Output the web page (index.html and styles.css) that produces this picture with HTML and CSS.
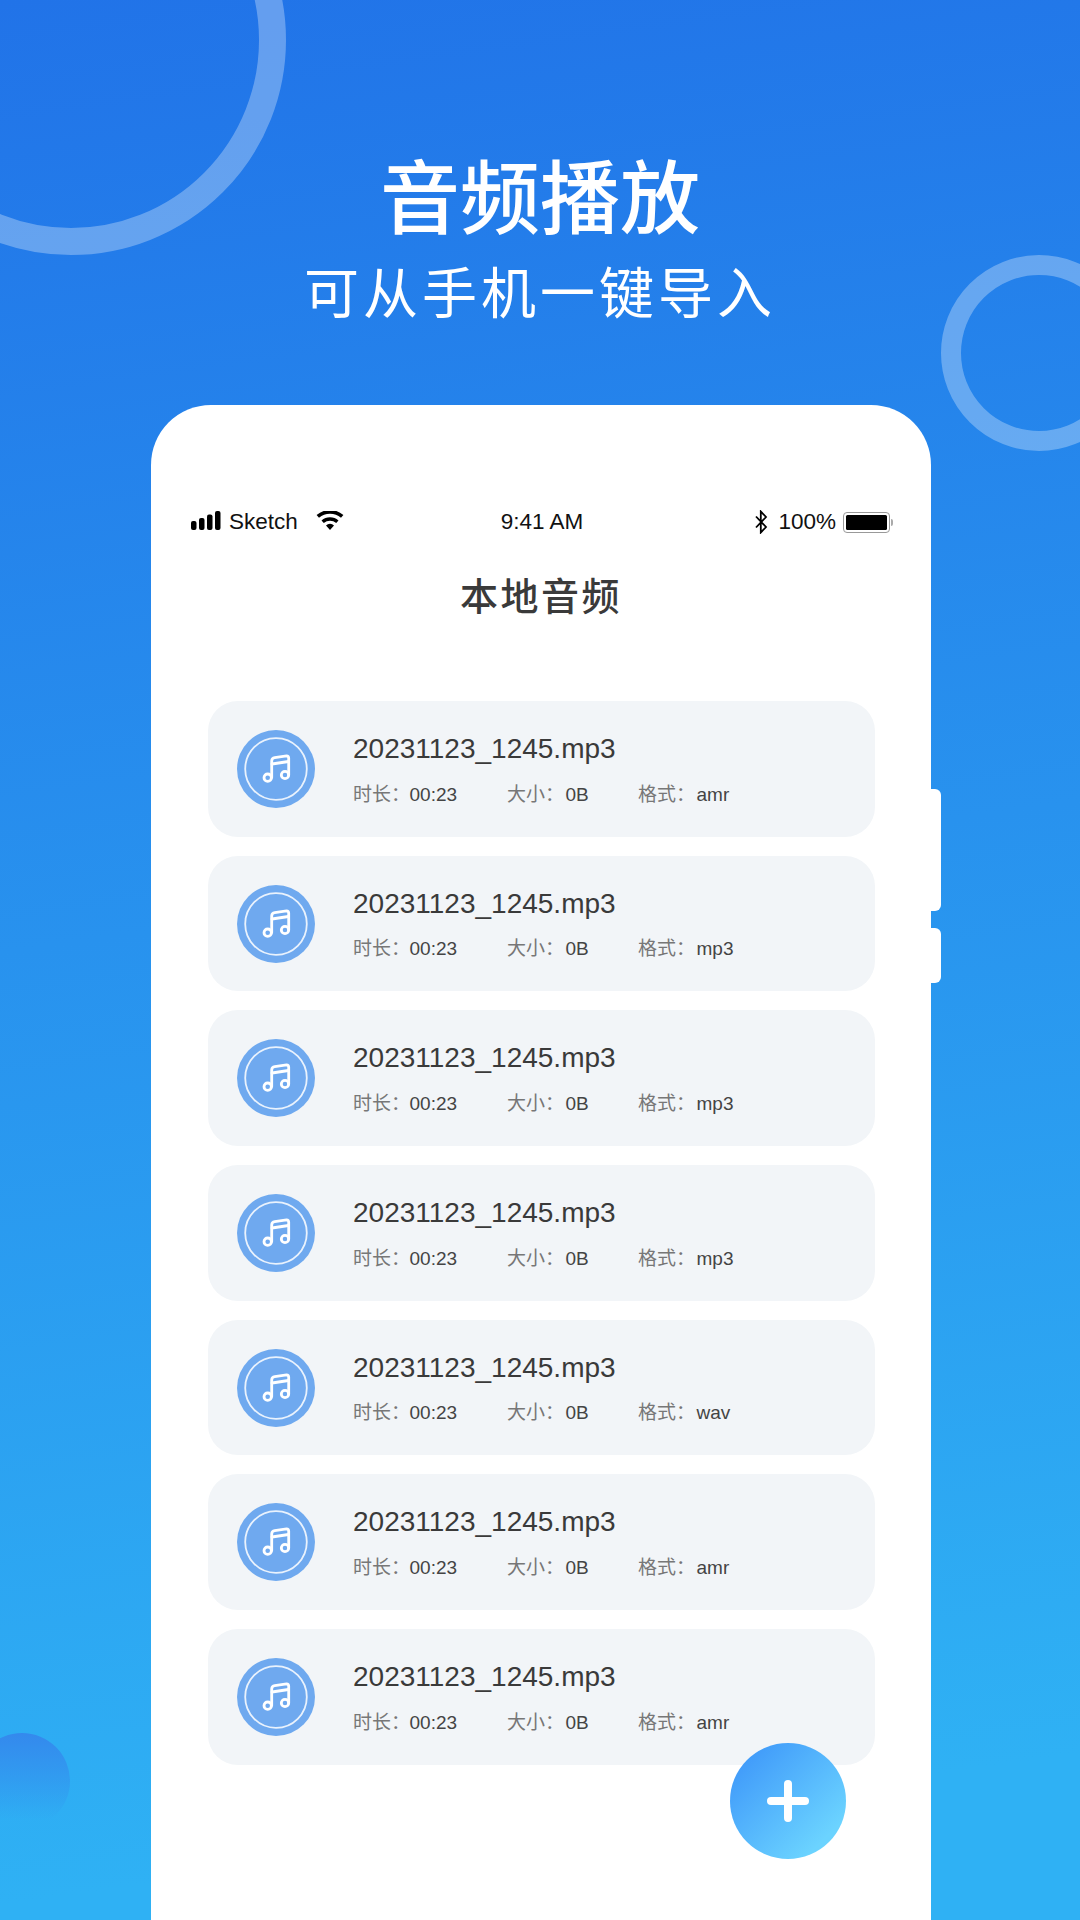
FILE: index.html
```html
<!DOCTYPE html>
<html lang="zh">
<head>
<meta charset="utf-8">
<title>音频播放</title>
<link rel="stylesheet" href="styles.css">
</head>
<body>
<div class="stage">
  <div class="deco ring-a"></div>
  <div class="deco ring-b"></div>
  <div class="deco blob"></div>
  <header class="hero">
    <h1 class="hero-title">音频播放</h1>
    <p class="hero-sub">可从手机一键导入</p>
  </header>
  <div class="phone-wrap">
    <span class="side-btn side-a"></span>
    <span class="side-btn side-b"></span>
    <main class="phone">
      <div class="status">
        <div class="st-left">
          <svg class="sig" width="31" height="20" viewBox="0 0 31 20"><rect x="0" y="10" width="5.500" height="9" rx="2"/><rect x="8" y="7" width="5.500" height="12" rx="2"/><rect x="16" y="3.500" width="5.500" height="15.500" rx="2"/><rect x="24" y="0" width="5.500" height="19" rx="2"/></svg>
          <span class="st-carrier">Sketch</span>
          <svg class="wifi" width="28" height="20" viewBox="0 0 28 20"><path d="M14 19l-4-4.600a6 6 0 0 1 8 0zM7.800 12a9.600 9.600 0 0 1 12.400 0l2.300-2.600a13 13 0 0 0-17 0zM3 6.800a16.600 16.600 0 0 1 22 0l2.400-2.700a20.200 20.200 0 0 0-26.800 0z"/></svg>
        </div>
        <div class="st-time">9:41 AM</div>
        <div class="st-right">
          <svg class="bt" width="14" height="24" viewBox="0 0 14 24"><path d="M2 6.500l10 10.500-5.200 5.500V1.500L12 7 2 17.500" fill="none" stroke="#000" stroke-width="1.800"/></svg>
          <span class="st-pct">100%</span>
          <span class="batt"><span class="batt-fill"></span></span>
          <span class="batt-nub"></span>
        </div>
      </div>
      <h2 class="page-title">本地音频</h2>
      <ul class="list">
        <li class="card">
          <div class="disc"><svg width="78" height="78" viewBox="0 0 78 78"><circle cx="39" cy="39" r="30.800" fill="none" stroke="#fff" stroke-opacity=".85" stroke-width="1.800"/><g fill="none" stroke="#fff" stroke-width="2.800" stroke-linecap="round"><circle cx="30.700" cy="47.700" r="3.700"/><circle cx="48" cy="45" r="3.700"/><path d="M34.700 47.500V31a3.500 3.500 0 0 1 3-3.300l11.800-1.900a2.400 2.400 0 0 1 2.200 2.400V45"/><path d="M35 34l16.500-2.500"/></g></svg></div>
          <div class="info"><div class="name">20231123_1245.mp3</div><div class="meta"><span class="m m1"><i>时长：</i>00:23</span><span class="m m2"><i>大小：</i>0B</span><span class="m"><i>格式：</i>amr</span></div></div>
        </li>
        <li class="card">
          <div class="disc"><svg width="78" height="78" viewBox="0 0 78 78"><circle cx="39" cy="39" r="30.800" fill="none" stroke="#fff" stroke-opacity=".85" stroke-width="1.800"/><g fill="none" stroke="#fff" stroke-width="2.800" stroke-linecap="round"><circle cx="30.700" cy="47.700" r="3.700"/><circle cx="48" cy="45" r="3.700"/><path d="M34.700 47.500V31a3.500 3.500 0 0 1 3-3.300l11.800-1.900a2.400 2.400 0 0 1 2.200 2.400V45"/><path d="M35 34l16.500-2.500"/></g></svg></div>
          <div class="info"><div class="name">20231123_1245.mp3</div><div class="meta"><span class="m m1"><i>时长：</i>00:23</span><span class="m m2"><i>大小：</i>0B</span><span class="m"><i>格式：</i>mp3</span></div></div>
        </li>
        <li class="card">
          <div class="disc"><svg width="78" height="78" viewBox="0 0 78 78"><circle cx="39" cy="39" r="30.800" fill="none" stroke="#fff" stroke-opacity=".85" stroke-width="1.800"/><g fill="none" stroke="#fff" stroke-width="2.800" stroke-linecap="round"><circle cx="30.700" cy="47.700" r="3.700"/><circle cx="48" cy="45" r="3.700"/><path d="M34.700 47.500V31a3.500 3.500 0 0 1 3-3.300l11.800-1.900a2.400 2.400 0 0 1 2.200 2.400V45"/><path d="M35 34l16.500-2.500"/></g></svg></div>
          <div class="info"><div class="name">20231123_1245.mp3</div><div class="meta"><span class="m m1"><i>时长：</i>00:23</span><span class="m m2"><i>大小：</i>0B</span><span class="m"><i>格式：</i>mp3</span></div></div>
        </li>
        <li class="card">
          <div class="disc"><svg width="78" height="78" viewBox="0 0 78 78"><circle cx="39" cy="39" r="30.800" fill="none" stroke="#fff" stroke-opacity=".85" stroke-width="1.800"/><g fill="none" stroke="#fff" stroke-width="2.800" stroke-linecap="round"><circle cx="30.700" cy="47.700" r="3.700"/><circle cx="48" cy="45" r="3.700"/><path d="M34.700 47.500V31a3.500 3.500 0 0 1 3-3.300l11.800-1.900a2.400 2.400 0 0 1 2.200 2.400V45"/><path d="M35 34l16.500-2.500"/></g></svg></div>
          <div class="info"><div class="name">20231123_1245.mp3</div><div class="meta"><span class="m m1"><i>时长：</i>00:23</span><span class="m m2"><i>大小：</i>0B</span><span class="m"><i>格式：</i>mp3</span></div></div>
        </li>
        <li class="card">
          <div class="disc"><svg width="78" height="78" viewBox="0 0 78 78"><circle cx="39" cy="39" r="30.800" fill="none" stroke="#fff" stroke-opacity=".85" stroke-width="1.800"/><g fill="none" stroke="#fff" stroke-width="2.800" stroke-linecap="round"><circle cx="30.700" cy="47.700" r="3.700"/><circle cx="48" cy="45" r="3.700"/><path d="M34.700 47.500V31a3.500 3.500 0 0 1 3-3.300l11.800-1.900a2.400 2.400 0 0 1 2.200 2.400V45"/><path d="M35 34l16.500-2.500"/></g></svg></div>
          <div class="info"><div class="name">20231123_1245.mp3</div><div class="meta"><span class="m m1"><i>时长：</i>00:23</span><span class="m m2"><i>大小：</i>0B</span><span class="m"><i>格式：</i>wav</span></div></div>
        </li>
        <li class="card">
          <div class="disc"><svg width="78" height="78" viewBox="0 0 78 78"><circle cx="39" cy="39" r="30.800" fill="none" stroke="#fff" stroke-opacity=".85" stroke-width="1.800"/><g fill="none" stroke="#fff" stroke-width="2.800" stroke-linecap="round"><circle cx="30.700" cy="47.700" r="3.700"/><circle cx="48" cy="45" r="3.700"/><path d="M34.700 47.500V31a3.500 3.500 0 0 1 3-3.300l11.800-1.900a2.400 2.400 0 0 1 2.200 2.400V45"/><path d="M35 34l16.500-2.500"/></g></svg></div>
          <div class="info"><div class="name">20231123_1245.mp3</div><div class="meta"><span class="m m1"><i>时长：</i>00:23</span><span class="m m2"><i>大小：</i>0B</span><span class="m"><i>格式：</i>amr</span></div></div>
        </li>
        <li class="card">
          <div class="disc"><svg width="78" height="78" viewBox="0 0 78 78"><circle cx="39" cy="39" r="30.800" fill="none" stroke="#fff" stroke-opacity=".85" stroke-width="1.800"/><g fill="none" stroke="#fff" stroke-width="2.800" stroke-linecap="round"><circle cx="30.700" cy="47.700" r="3.700"/><circle cx="48" cy="45" r="3.700"/><path d="M34.700 47.500V31a3.500 3.500 0 0 1 3-3.300l11.800-1.900a2.400 2.400 0 0 1 2.200 2.400V45"/><path d="M35 34l16.500-2.500"/></g></svg></div>
          <div class="info"><div class="name">20231123_1245.mp3</div><div class="meta"><span class="m m1"><i>时长：</i>00:23</span><span class="m m2"><i>大小：</i>0B</span><span class="m"><i>格式：</i>amr</span></div></div>
        </li>
      </ul>
      <div class="fab"><span class="plus-h"></span><span class="plus-v"></span></div>
    </main>
  </div>
</div>
</body>
</html>
```
FILE: styles.css
```css
* { box-sizing: border-box; }
html, body { margin: 0; padding: 0; }
body {
  width: 1080px;
  height: 1920px;
  overflow: hidden;
  font-family: "Liberation Sans", "Noto Sans CJK SC", sans-serif;
}
.stage {
  position: relative;
  width: 1080px;
  height: 1920px;
  overflow: hidden;
  display: flex;
  flex-direction: column;
  background: linear-gradient(172deg, #2173e8 0%, #2fb1f4 92%, #2fb1f4 100%);
}
.deco { position: absolute; border-radius: 50%; }
.ring-a {
  left: -144px; top: -175px;
  width: 430px; height: 430px;
  border: 27px solid rgba(255, 255, 255, .3);
}
.ring-b {
  left: 941px; top: 255px;
  width: 196px; height: 196px;
  border: 20px solid rgba(255, 255, 255, .3);
}
.blob {
  left: -26px; top: 1733px;
  width: 96px; height: 96px;
  background: linear-gradient(180deg, #3489ed 0%, rgba(47, 177, 244, 0) 90%);
}
.hero {
  position: relative;
  height: 405px;
  padding-top: 150px;
  text-align: center;
  color: #fff;
  font-family: "Noto Sans CJK SC", sans-serif;
}
.hero-title {
  margin: 0;
  font-size: 80px;
  line-height: 84px;
  font-weight: 500;
}
.hero-sub {
  margin: 19px 0 0;
  font-size: 55px;
  line-height: 72px;
  letter-spacing: 4px;
  font-weight: 400;
}
.phone-wrap {
  position: relative;
  margin-left: 151px;
  width: 780px;
  flex: 1;
}
.side-btn {
  position: absolute;
  left: 778px;
  width: 12px;
  background: #fff;
  border-radius: 0 6px 6px 0;
}
.side-a { top: 384px; height: 122px; }
.side-b { top: 523px; height: 55px; }
.phone {
  position: relative;
  height: 100%;
  background: #fff;
  border-radius: 60px 60px 0 0;
  padding-top: 101px;
}
.status {
  position: relative;
  height: 32px;
  padding: 0 38px 0 40px;
  display: flex;
  align-items: center;
  justify-content: space-between;
  font-size: 22.500px;
  color: #111;
}
.st-left, .st-right { display: flex; align-items: center; }
.st-left { width: 240px; }
.st-right { width: 240px; justify-content: flex-end; }
.st-time { text-align: center; }
.sig { margin-right: 7px; margin-top: -3px; }
.wifi { margin-left: 18px; margin-top: -2px; }
.bt { margin-right: 10px; }
.st-pct { margin-right: 7px; }
.batt {
  width: 47px; height: 21px;
  border: 1.500px solid #999;
  border-radius: 4px;
  padding: 2px;
  display: block;
}
.batt-fill { display: block; height: 100%; background: #000; border-radius: 1.500px; }
.batt-nub { width: 2px; height: 7px; background: #aaa; border-radius: 0 2px 2px 0; margin-left: 1px; }
.page-title {
  margin: 31px 0 0;
  text-align: center;
  font-family: "Noto Sans CJK SC", sans-serif;
  font-size: 38px;
  line-height: 50px;
  letter-spacing: 2.500px;
  font-weight: 500;
  color: #3a3a3a;
}
.list {
  list-style: none;
  margin: 82px 0 0;
  padding: 0 56px 0 57px;
  display: flex;
  flex-direction: column;
  gap: 19.200px;
}
.card {
  height: 135.500px;
  background: #f2f5f8;
  border-radius: 30px;
  padding: 29px 0 0 29px;
  display: flex;
}
.disc {
  width: 78px; height: 78px;
  border-radius: 50%;
  background: #6fa9ef;
  flex: none;
}
.disc svg { display: block; }
.info { margin-left: 38px; }
.name {
  margin-top: 1px;
  font-size: 28px;
  line-height: 36px;
  color: #3a3a3a;
}
.meta {
  margin-top: 13.500px;
  display: flex;
  font-size: 19px;
  line-height: 28px;
  color: #444;
}
.m i { font-style: normal; color: #777; margin-right: 1.500px; }
.m1 i { margin-right: -.500px; }
.m1 { width: 154px; }
.m2 { width: 131px; }
.fab {
  position: absolute;
  left: 579px;
  top: 1338px;
  width: 116px; height: 116px;
  border-radius: 50%;
  background: linear-gradient(135deg, #429dfa 15%, #6bd3ff 82%);
}
.plus-h, .plus-v { position: absolute; background: #fff; border-radius: 4px; }
.plus-h { left: 37px; top: 54px; width: 42px; height: 8px; }
.plus-v { left: 54px; top: 37px; width: 8px; height: 42px; }
```
